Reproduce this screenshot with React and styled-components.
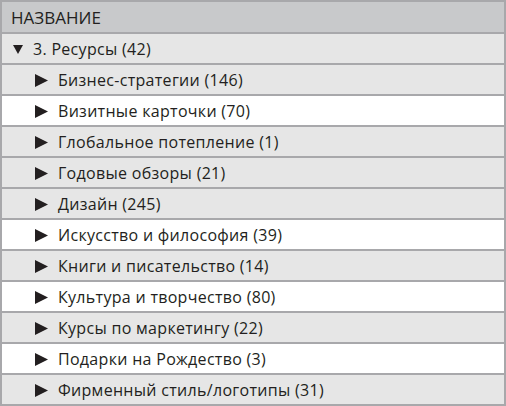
import React from "react";
import styled, { createGlobalStyle } from "styled-components";

const GlobalStyle = createGlobalStyle`
  html, body {
    margin: 0;
    padding: 0;
    background: #ffffff;
  }
`;

const Table = styled.div`
  width: 506px;
  height: 406px;
  box-sizing: border-box;
  border: 2px solid #a8a8ab;
  display: flex;
  flex-direction: column;
  font-family: "Open Sans", "Liberation Sans", sans-serif;
  color: #231f20;
  overflow: hidden;
`;

const Header = styled.div`
  height: 30px;
  flex: none;
  display: flex;
  align-items: center;
  padding-left: 9px;
  background: #c8c9cb;
  border-bottom: 2px solid #a8a8ab;
  font-size: 17px;
`;

const Row = styled.div`
  height: 29px;
  flex: none;
  display: flex;
  align-items: center;
  gap: ${(p) => (p.$level ? "10px" : "10px")};
  padding-left: ${(p) => (p.$level ? "33px" : "11px")};
  background: ${(p) => (p.$light ? "#ffffff" : "#e6e6e6")};
  border-bottom: 2px solid #a8a8ab;
  font-size: 16px;
  letter-spacing: 0.3px;

  &:last-child {
    border-bottom: none;
  }
`;

const Arrow = styled.svg`
  flex: none;
  display: block;
  margin-top: 1px;
`;

const Label = styled.span`
  white-space: nowrap;
`;

const Caret = ({ open }) =>
  open ? (
    <Arrow width="10" height="9" viewBox="0 0 10 9">
      <polygon points="0,0 10,0 5,9" fill="#231f20" />
    </Arrow>
  ) : (
    <Arrow width="13" height="13" viewBox="0 0 13 13">
      <polygon points="0,0 13,6.5 0,13" fill="#231f20" />
    </Arrow>
  );

const items = [
  { name: "Бизнес-стратегии", count: 146 },
  { name: "Визитные карточки", count: 70, light: true },
  { name: "Глобальное потепление", count: 1 },
  { name: "Годовые обзоры", count: 21 },
  { name: "Дизайн", count: 245 },
  { name: "Искусство и философия", count: 39, light: true },
  { name: "Книги и писательство", count: 14 },
  { name: "Культура и творчество", count: 80, light: true },
  { name: "Курсы по маркетингу", count: 22 },
  { name: "Подарки на Рождество", count: 3, light: true },
  { name: "Фирменный стиль/логотипы", count: 31 },
];

export default function App() {
  return (
    <>
      <GlobalStyle />
      <Table>
        <Header>НАЗВАНИЕ</Header>
        <Row>
          <Caret open />
          <Label>3. Ресурсы (42)</Label>
        </Row>
        {items.map((item) => (
          <Row key={item.name} $level={1} $light={item.light}>
            <Caret />
            <Label>
              {item.name} ({item.count})
            </Label>
          </Row>
        ))}
      </Table>
    </>
  );
}
